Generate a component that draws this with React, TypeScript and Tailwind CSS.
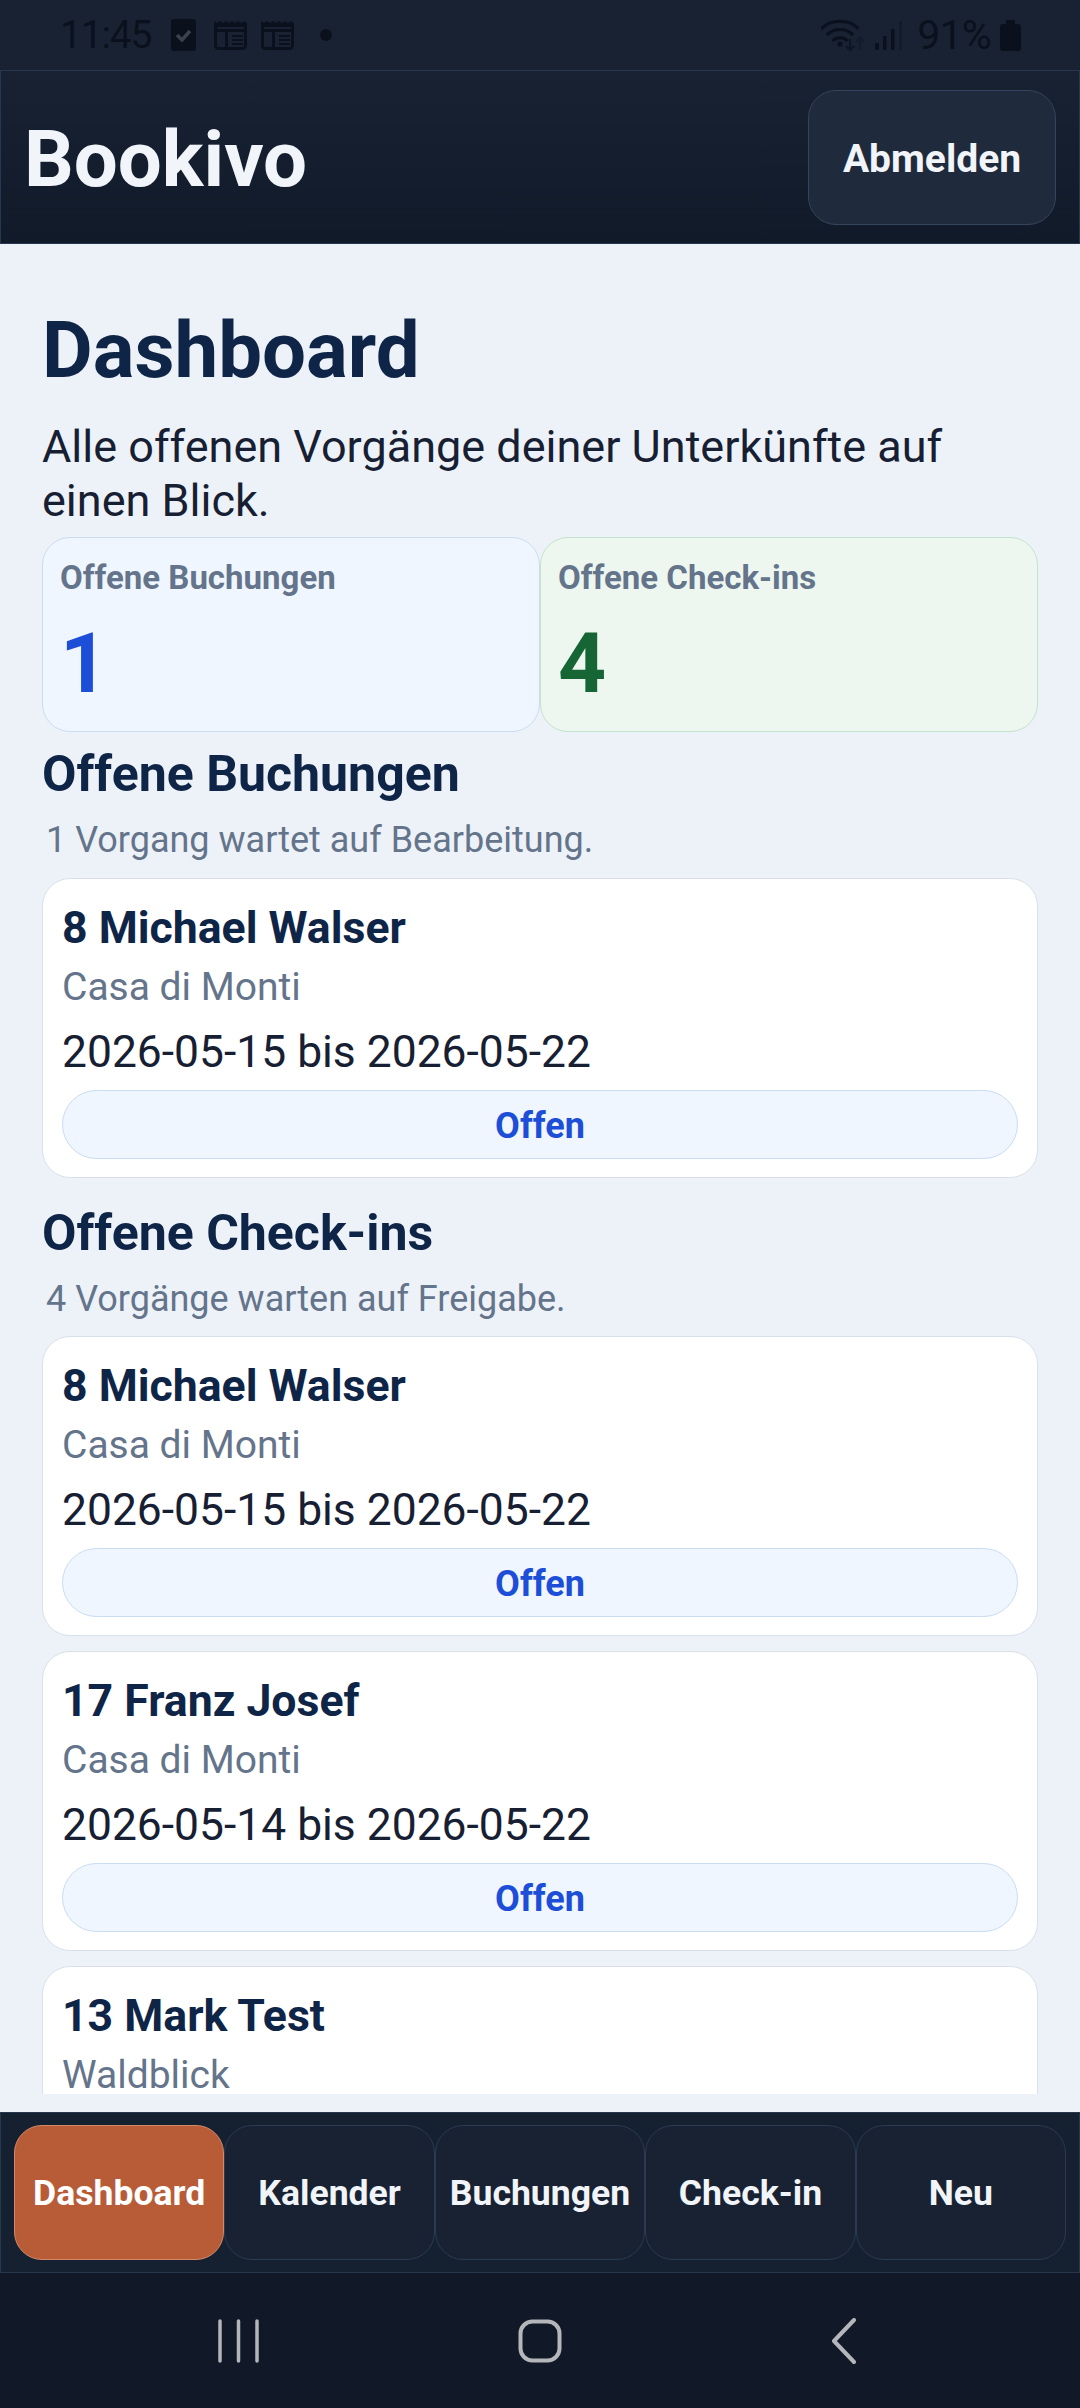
const NavBtn = ({ label, active }: { label: string; active?: boolean }) => (
  <div className={`flex-1 h-[135px] rounded-[28px] border flex items-center justify-center pt-[2px] text-[35.6px] font-bold ${active ? "bg-[#b85c38] border-[#d08a68] text-white" : "bg-[#182233] border-[#2b3b53] text-[#f1f5f9]"}`}>
    {label}
  </div>
);

const Card = ({ title, place, dates }: { title: string; place: string; dates: string }) => (
  <div className="bg-white border border-[#d9e0e9] rounded-[28px] h-[300px] shrink-0 px-[19px] pt-[22px]">
    <div className="text-[44.6px] leading-[54px] font-bold text-[#0f2547]">{title}</div>
    <div className="text-[39px] leading-[48px] text-[#64748b] mt-[8px]">{place}</div>
    <div className="text-[44.4px] leading-[54px] text-[#172033] mt-[14px]">{dates}</div>
    <div className="h-[69px] mt-[11px] pt-[2px] rounded-full bg-[#eff6ff] border border-[#c9dcf2] flex items-center justify-center text-[36px] font-bold text-[#1d4ed8]">Offen</div>
  </div>
);

const Stat = ({ label, value, cls, valueCls }: { label: string; value: string; cls: string; valueCls: string }) => (
  <div className={`flex-1 h-[195px] rounded-[28px] border px-[17px] pt-[18px] ${cls}`}>
    <div className="text-[33px] leading-[44px] font-bold text-[#64748b]">{label}</div>
    <div className={`text-[84px] leading-[100px] font-bold mt-[14px] ${valueCls}`}>{value}</div>
  </div>
);

const Paper = () => (
  <svg width="33" height="29" viewBox="0 0 33 29" fill="none">
    <path d="M0 6V0l3 2 3-2 3 2 3-2 3 2 3-2 3 2 3-2 3 2 3-2 3 2V6z" fill="#0b111c" />
    <rect x="1.5" y="3.5" width="30" height="24" rx="3" stroke="#0b111c" strokeWidth="3" />
    <path d="M2 9.5h29M12.5 11v15" stroke="#0b111c" strokeWidth="3" />
    <path d="M18 15h11M18 19h11M18 23h11" stroke="#0b111c" strokeWidth="2" />
  </svg>
);

export default function App() {
  return (
    <div className="w-[1080px] h-[2408px] flex flex-col overflow-hidden bg-[#edf2f8] font-['Roboto',sans-serif]">
      <div className="h-[70px] shrink-0 bg-[#182233] flex items-center justify-between pl-[60px] pr-[59px] text-[#0b111c]">
        <div className="flex items-center">
          <span className="w-[90px] text-[39px] font-normal leading-none tracking-[-1.2px] whitespace-nowrap">11:45</span>
          <svg className="ml-[21px]" width="25" height="32" viewBox="0 0 25 32">
            <rect width="25" height="32" rx="3" fill="#0b111c" />
            <path d="M6 16l5 5 8-9" stroke="#3a4250" strokeWidth="3.5" fill="none" />
          </svg>
          <span className="ml-[18px] flex"><Paper /></span>
          <span className="ml-[14px] flex"><Paper /></span>
          <span className="ml-[26px] w-[12px] h-[12px] rounded-full bg-[#0b111c]" />
        </div>
        <div className="flex items-center">
          <svg width="44" height="34" viewBox="0 0 44 34" fill="none">
            <path d="M1.5 10C10 1 28 1 36.5 10M7 16c6-6 18-6 24 0M12.5 22c4-3 9-3 13 0" stroke="#0b111c" strokeWidth="3.2" strokeLinecap="round" />
            <circle cx="19" cy="26" r="2.6" fill="#0b111c" />
            <path d="M29 21v11M25 28l4 4 4-4" stroke="#0b111c" strokeWidth="2.4" opacity="0.7" />
            <path d="M39 32V20M35 24l4-4 4 4" stroke="#0b111c" strokeWidth="2.4" opacity="0.4" />
          </svg>
          <svg className="ml-[10px]" width="27" height="29" viewBox="0 0 27 29">
            <rect x="0" y="22" width="4" height="7" rx="1" fill="#0b111c" />
            <rect x="8" y="15" width="3.5" height="14" fill="#0b111c" />
            <rect x="16" y="8" width="3.5" height="21" fill="#0b111c" />
            <rect x="24" y="0" width="3" height="29" fill="#0b111c" opacity="0.4" />
          </svg>
          <span className="ml-[15px] text-[41px] font-normal leading-none tracking-[-0.8px]">91%</span>
          <svg className="ml-[9px]" width="21" height="31" viewBox="0 0 21 31">
            <path d="M6 0h9v4h3a3 3 0 013 3v21a3 3 0 01-3 3H3a3 3 0 01-3-3V7a3 3 0 013-3h3z" fill="#0b111c" />
          </svg>
        </div>
      </div>

      <header className="h-[174px] shrink-0 border border-[#273750] bg-gradient-to-b from-[#182233] to-[#111a29] flex items-center justify-between pl-[23px] pr-[23px]">
        <div className="text-[78px] leading-none font-bold text-[#f1f5f9] pt-[6px]">Bookivo</div>
        <div className="w-[248px] h-[135px] rounded-[28px] bg-[#1f2a3c] border border-[#35455d] flex items-center justify-center pt-[4px] text-[39px] font-bold text-[#f1f5f9]">Abmelden</div>
      </header>

      <main className="flex-1 min-h-0 pb-[18px] flex flex-col">
        <div className="flex-1 min-h-0 overflow-hidden px-[42px] pt-[61px] flex flex-col">
          <h1 className="text-[78px] leading-[92px] font-bold text-[#0f2547]">Dashboard</h1>
          <p className="text-[45px] leading-[54px] text-[#172033] mt-[23px]">Alle offenen Vorgänge deiner Unterkünfte auf einen Blick.</p>
          <div className="flex mt-[9px]">
            <Stat label="Offene Buchungen" value="1" cls="bg-[#eff6ff] border-[#c9dcf2]" valueCls="text-[#1d4ed8]" />
            <Stat label="Offene Check-ins" value="4" cls="bg-[#edf7f0] border-[#c2e3cc]" valueCls="text-[#166534]" />
          </div>
          <h2 className="text-[50px] leading-[58px] font-bold text-[#0f2547] mt-[13px]">Offene Buchungen</h2>
          <p className="text-[36px] leading-[44px] text-[#64748b] ml-[4px] mt-[15px]">1 Vorgang wartet auf Bearbeitung.</p>
          <div className="mt-[16px]"><Card title="8 Michael Walser" place="Casa di Monti" dates="2026-05-15 bis 2026-05-22" /></div>
          <h2 className="text-[50px] leading-[58px] font-bold text-[#0f2547] mt-[26px]">Offene Check-ins</h2>
          <p className="text-[36px] leading-[44px] text-[#64748b] ml-[4px] mt-[15px]">4 Vorgänge warten auf Freigabe.</p>
          <div className="mt-[15px] flex flex-col gap-[15px]">
            <Card title="8 Michael Walser" place="Casa di Monti" dates="2026-05-15 bis 2026-05-22" />
            <Card title="17 Franz Josef" place="Casa di Monti" dates="2026-05-14 bis 2026-05-22" />
            <Card title="13 Mark Test" place="Waldblick" dates="2026-05-14 bis 2026-05-22" />
          </div>
        </div>
      </main>

      <nav className="h-[161px] shrink-0 border border-[#273750] bg-[#152030] flex items-center px-[13px]">
        <NavBtn label="Dashboard" active />
        <NavBtn label="Kalender" />
        <NavBtn label="Buchungen" />
        <NavBtn label="Check-in" />
        <NavBtn label="Neu" />
      </nav>

      <div className="h-[135px] shrink-0 bg-[#111827] flex items-center pl-[218px]">
        <svg width="41" height="44" viewBox="0 0 41 44" fill="none" stroke="#b4b6ba" strokeWidth="3.5" strokeLinecap="round">
          <path d="M2 2v40M20.5 2v40M39 2v40" />
        </svg>
        <svg className="ml-[259px]" width="44" height="44" viewBox="0 0 44 44" fill="none" stroke="#b4b6ba" strokeWidth="4">
          <rect x="2.5" y="2.5" width="39" height="39" rx="12" />
        </svg>
        <svg className="ml-[269px]" width="25" height="46" viewBox="0 0 25 46" fill="none" stroke="#b4b6ba" strokeWidth="4" strokeLinecap="round" strokeLinejoin="round">
          <path d="M23 2L3 23l20 21" />
        </svg>
      </div>
    </div>
  );
}
